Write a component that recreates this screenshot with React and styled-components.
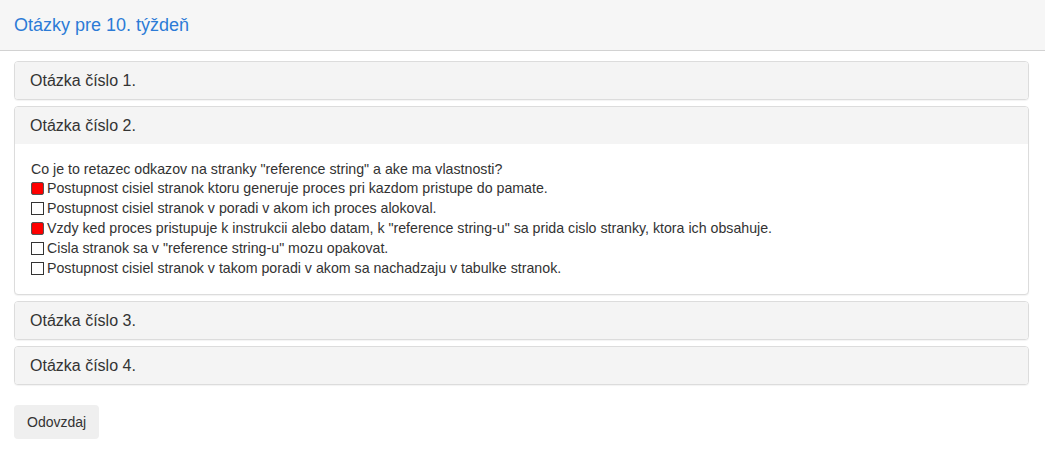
import React, { useState } from 'react';
import styled, { createGlobalStyle } from 'styled-components';

const GlobalStyle = createGlobalStyle`
	body {
		margin: 0;
		background: #fff;
		font-family: 'Liberation Sans', Arial, sans-serif;
		color: #333;
	}
`;

const Header = styled.div`
	height: 50px;
	display: flex;
	align-items: center;
	padding: 0 14px;
	background: #f6f6f6;
	border-bottom: 1px solid #d2d2d2;
`;

const Title = styled.h1`
	margin: 0;
	font-size: 18px;
	font-weight: 400;
	color: #2c7bd6;
`;

const Content = styled.div`
	padding: 10px 16px 0 14px;
	display: flex;
	flex-direction: column;
	gap: 6px;
`;

const Panel = styled.div`
	border: 1px solid #dcdcdc;
	border-radius: 4px;
	background: #fff;
	box-shadow: 0 1px 1px rgba(0, 0, 0, 0.05);
	overflow: hidden;
`;

const PanelHeading = styled.div`
	padding: 10px 15px;
	background: #f4f4f4;
	font-size: 16px;
	line-height: 17px;
	color: #333;
	cursor: pointer;
`;

const PanelBody = styled.div`
	padding: 16px 16px;
	font-size: 14.2px;
	line-height: 20px;
`;

const QuestionText = styled.div`
	line-height: 18px;
`;

const Option = styled.label`
	display: flex;
	align-items: center;
	gap: 3px;
	height: 20px;
`;

const Box = styled.span`
	width: 11px;
	height: 11px;
	flex: none;
	margin-top: 1px;
	border: 1px solid ${p => (p.checked ? '#555' : '#333')};
	background: ${p =>
		p.checked ? 'radial-gradient(circle at 55% 50%, #ff0000 60%, #e00000 100%)' : '#fff'};
	border-radius: ${p => (p.checked ? '2px' : '0')};
`;

const Button = styled.button`
	align-self: flex-start;
	margin-top: 14px;
	height: 34px;
	padding: 0 13px;
	font-family: 'Liberation Sans', Arial, sans-serif;
	font-size: 14px;
	color: #333;
	background: #efefef;
	border: none;
	border-radius: 4px;
	cursor: pointer;
`;

const options = [
	{ text: 'Postupnost cisiel stranok ktoru generuje proces pri kazdom pristupe do pamate.', checked: true },
	{ text: 'Postupnost cisiel stranok v poradi v akom ich proces alokoval.', checked: false },
	{
		text: 'Vzdy ked proces pristupuje k instrukcii alebo datam, k "reference string-u" sa prida cislo stranky, ktora ich obsahuje.',
		checked: true,
	},
	{ text: 'Cisla stranok sa v "reference string-u" mozu opakovat.', checked: false },
	{ text: 'Postupnost cisiel stranok v takom poradi v akom sa nachadzaju v tabulke stranok.', checked: false },
];

export default function App() {
	const [open, setOpen] = useState(2);
	const [answers, setAnswers] = useState(options.map(o => o.checked));

	const toggle = i => setAnswers(a => a.map((v, j) => (j === i ? !v : v)));

	return (
		<>
			<GlobalStyle />
			<Header>
				<Title>Otázky pre 10. týždeň</Title>
			</Header>
			<Content>
				{[1, 2, 3, 4].map(n => (
					<Panel key={n}>
						<PanelHeading onClick={() => setOpen(open === n ? null : n)}>Otázka číslo {n}.</PanelHeading>
						{open === n && n === 2 && (
							<PanelBody>
								<QuestionText>Co je to retazec odkazov na stranky "reference string" a ake ma vlastnosti?</QuestionText>
								{options.map((o, i) => (
									<Option key={i} onClick={() => toggle(i)}>
										<Box checked={answers[i]} />
										{o.text}
									</Option>
								))}
							</PanelBody>
						)}
					</Panel>
				))}
				<Button>Odovzdaj</Button>
			</Content>
		</>
	);
}
